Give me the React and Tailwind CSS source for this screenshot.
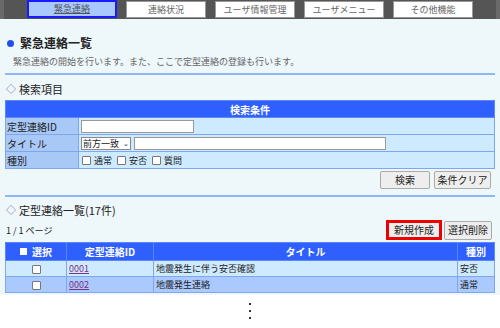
import React from "react"

const tabs = [
  { label: "緊急連絡", active: true },
  { label: "連絡状況" },
  { label: "ユーザ情報管理" },
  { label: "ユーザメニュー" },
  { label: "その他機能" },
]

const rows = [
  { id: "0001", title: "地震発生に伴う安否確認", kind: "安否", bg: "bg-[#cdeaff]" },
  { id: "0002", title: "地震発生連絡", kind: "通常", bg: "bg-[#a9c9ff]" },
]

function Box() {
  return <span className="inline-block w-[9px] h-[9px] bg-white border border-[#777] rounded-[1px] align-middle" />
}

export default function App() {
  return (
    <div className="w-[500px] h-[328px] bg-white font-['Noto_Sans_CJK_JP','Noto_Sans',sans-serif] text-[#222] overflow-hidden">
      <div className="h-[295px] bg-[#eef7fa] overflow-hidden">
        {/* top menu */}
        <div className="h-[19px] bg-[#6a6a6a] px-[4px]">
          <div className="h-full bg-[#555] flex items-start pl-[23px] gap-[9px]">
            {tabs.map((t) =>
              t.active ? (
                <div key={t.label} className="w-[90px] h-[18px] bg-[#a8c8ff] border-2 border-[#1a1aff] flex items-center justify-center text-[9px] text-[#555] underline">
                  {t.label}
                </div>
              ) : (
                <div key={t.label} className="w-[80px] h-[17px] mt-[1px] bg-white border border-[#999] flex items-center justify-center text-[9px] text-[#666]">
                  {t.label}
                </div>
              )
            )}
          </div>
        </div>

        <div className="px-[5px]">
          <div className="flex items-center gap-[6px] mt-[15px] pl-[2px]">
            <span className="w-[7px] h-[7px] rounded-full bg-[#2050ee]" />
            <span className="text-[12px] font-bold leading-[18px]">緊急連絡一覧</span>
          </div>
          <div className="text-[9px] text-[#666] mt-[3px] pl-[8px] leading-[13px]">
            緊急連絡の開始を行います。また、ここで定型連絡の登録も行います。
          </div>
          <div className="h-[2px] bg-[#8fb6f5] mt-[5px]" />

          <div className="flex items-center gap-[3px] mt-[6px] pl-[1px] text-[11px] leading-[16px]">
            <span className="text-[#7a5aa0] text-[10px]">◇</span>
            <span>検索項目</span>
          </div>

          <table className="w-full border-collapse mt-[3px] text-[10px] leading-[15px]">
            <tbody>
              <tr>
                <td colSpan={2} className="bg-[#2f5fff] text-white font-bold text-center h-[17px] border border-[#5f86f5]">検索条件</td>
              </tr>
              <tr className="h-[17px]">
                <td className="w-[73px] bg-[#a8c8f5] border border-[#7fa6ee] pl-[1px]">定型連絡ID</td>
                <td className="bg-[#cdeaff] border border-[#7fa6ee] pl-[2px]">
                  <div className="w-[113px] h-[13px] bg-white border border-[#999]" />
                </td>
              </tr>
              <tr className="h-[17px]">
                <td className="bg-[#a8c8f5] border border-[#7fa6ee] pl-[1px]">タイトル</td>
                <td className="bg-[#cdeaff] border border-[#7fa6ee] pl-[2px]">
                  <div className="flex items-center gap-[3px]">
                    <div className="w-[50px] h-[13px] bg-white border border-[#888] flex items-center justify-between px-[1px] text-[9px] leading-none">
                      <span>前方一致</span>
                      <span className="text-[7px]">⌄</span>
                    </div>
                    <div className="w-[252px] h-[13px] bg-white border border-[#999]" />
                  </div>
                </td>
              </tr>
              <tr className="h-[17px]">
                <td className="bg-[#a8c8f5] border border-[#7fa6ee] pl-[1px]">種別</td>
                <td className="bg-[#cdeaff] border border-[#7fa6ee] pl-[3px] text-[9px]">
                  <div className="flex items-center gap-[3px]">
                    <Box /><span className="mr-[2px]">通常</span>
                    <Box /><span className="mr-[2px]">安否</span>
                    <Box /><span>質問</span>
                  </div>
                </td>
              </tr>
            </tbody>
          </table>

          <div className="flex justify-end gap-[4px] mt-[2px] pr-[4px]">
            <button className="w-[50px] h-[18px] bg-[#eeeeee] border border-[#aaa] rounded-[2px] text-[10px] leading-none">検索</button>
            <button className="w-[57px] h-[18px] bg-[#eeeeee] border border-[#aaa] rounded-[2px] text-[10px] leading-none">条件クリア</button>
          </div>
          <div className="h-[2px] bg-[#8fb6f5] mt-[6px]" />

          <div className="flex items-center gap-[3px] mt-[5px] pl-[1px] text-[11px] leading-[16px]">
            <span className="text-[#7a5aa0] text-[10px]">◇</span>
            <span>定型連絡一覧(17件)</span>
          </div>

          <div className="flex items-center justify-between h-[20px] mt-[2px]">
            <span className="text-[9px] leading-[12px] pl-[1px] mt-[2px]">1 / 1 ページ</span>
            <div className="flex items-center gap-[2px] pr-[3px]">
              <div className="border-[3px] border-[#ee0000]">
                <button className="block w-[50px] h-[14px] bg-[#eeeeee] text-[10px] leading-none">新規作成</button>
              </div>
              <button className="w-[48px] h-[19px] bg-[#eeeeee] border border-[#aaa] rounded-[2px] text-[10px] leading-none">選択削除</button>
            </div>
          </div>

          <table className="w-full border-collapse mt-[2px] text-[9px] leading-[14px]">
            <thead>
              <tr className="h-[18px] bg-[#2f5fff] text-white font-bold text-[10px]">
                <th className="w-[61px] border border-[#5f86f5]">
                  <span className="inline-flex items-center gap-[5px]">
                    <span className="inline-block w-[7px] h-[7px] bg-white" />選択
                  </span>
                </th>
                <th className="w-[87px] border border-[#5f86f5]">定型連絡ID</th>
                <th className="border border-[#5f86f5]">タイトル</th>
                <th className="w-[37px] border border-[#5f86f5]">種別</th>
              </tr>
            </thead>
            <tbody>
              {rows.map((r) => (
                <tr key={r.id} className={`h-[16px] ${r.bg}`}>
                  <td className="border border-[#7fa6ee] text-center"><Box /></td>
                  <td className="border border-[#7fa6ee] pl-[2px]">
                    <a className="text-[#80307f] underline">{r.id}</a>
                  </td>
                  <td className="border border-[#7fa6ee] pl-[2px]">{r.title}</td>
                  <td className="border border-[#7fa6ee] pl-[2px]">{r.kind}</td>
                </tr>
              ))}
            </tbody>
          </table>
        </div>
      </div>
      <div className="flex flex-col items-center gap-[5px] pt-[8px]">
        <span className="w-[2px] h-[2px] bg-[#333]" />
        <span className="w-[2px] h-[2px] bg-[#333]" />
        <span className="w-[2px] h-[2px] bg-[#333]" />
      </div>
    </div>
  )
}
